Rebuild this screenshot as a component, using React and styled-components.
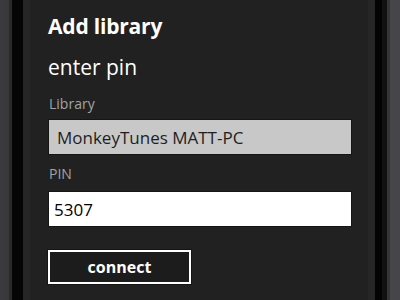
import styled, { createGlobalStyle } from "styled-components"

const GlobalStyle = createGlobalStyle`
  html, body {
    margin: 0;
    padding: 0;
    background: #000;
  }
  body {
    font-family: "Open Sans", "Noto Sans", sans-serif;
  }
`

const Phone = styled.div`
  display: flex;
  width: 400px;
  height: 300px;
  overflow: hidden;
`

const Bezel = styled.div`
  flex: 0 0 ${(p) => p.$width}px;
  background: ${(p) => p.$bg};
`

const Screen = styled.div`
  flex: 1;
  background: #212121;
  padding: 12px 16px 0 18px;
  display: flex;
  flex-direction: column;
`

const Title = styled.div`
  color: #fff;
  font-size: 21px;
  font-weight: 700;
  line-height: 28px;
  letter-spacing: -0.2px;
`

const Subtitle = styled.div`
  color: #fff;
  font-size: 21px;
  font-weight: 400;
  line-height: 28px;
  margin-top: 13px;
`

const Label = styled.div`
  color: #a3a3a3;
  font-size: 14px;
  line-height: 18px;
  margin-top: ${(p) => p.$top}px;
  padding-left: 1px;
`

const Field = styled.div`
  height: 36px;
  margin-top: ${(p) => p.$top}px;
  border: 1px solid #151515;
  background: ${(p) => (p.$disabled ? "#c8c8c8" : "#fff")};
  color: ${(p) => (p.$disabled ? "#1e1e1e" : "#000")};
  font-size: 17px;
  padding-left: ${(p) => (p.$disabled ? 8 : 5)}px;
  box-sizing: border-box;
  display: flex;
  align-items: center;
`

const Button = styled.button`
  margin-top: 23px;
  width: 143px;
  height: 34px;
  border: 2px solid #fff;
  outline: 1px solid #151515;
  background: #1c1c1c;
  color: #fff;
  font-family: inherit;
  font-size: 16px;
  font-weight: 700;
  padding: 0;
  box-sizing: border-box;
`

const App = () => {
  return (
    <>
      <GlobalStyle />
      <Phone>
        <Bezel $width={30} $bg="linear-gradient(to right, #3c3c3f 0, #38383b 9px, #2a2a2a 9px, #2a2a2a 12px, #050505 12px, #050505 23px, #262626 23px)" />
        <Screen>
          <Title>Add library</Title>
          <Subtitle>enter pin</Subtitle>
          <Label $top={14}>Library</Label>
          <Field $disabled $top={6}>MonkeyTunes MATT-PC</Field>
          <Label $top={10}>PIN</Label>
          <Field $top={8}>5307</Field>
          <Button>connect</Button>
        </Screen>
        <Bezel $width={32} $bg="linear-gradient(to right, #262626 0, #262626 7px, #030303 7px, #030303 14px, #111 14px, #111 19px, #353538 19px, #353538 22px, #46464a 22px)" />
      </Phone>
    </>
  )
}

export default App
